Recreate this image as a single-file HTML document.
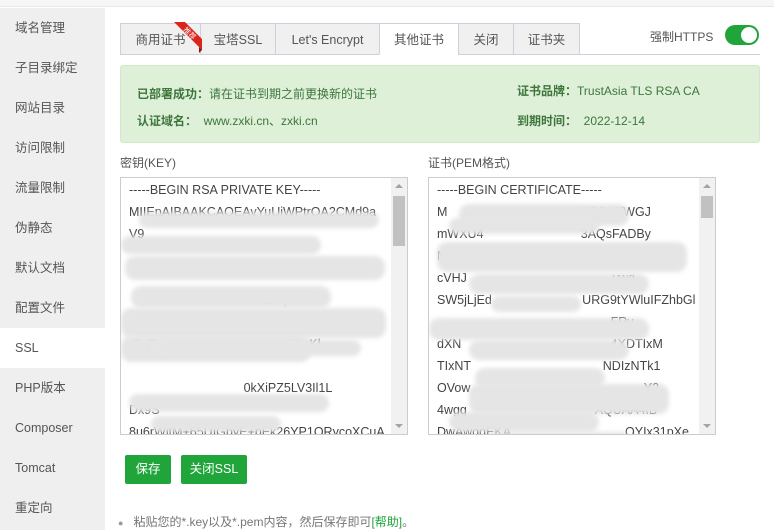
<!DOCTYPE html>
<html><head><meta charset="utf-8">
<style>
*{margin:0;padding:0;box-sizing:border-box}
body{width:774px;height:530px;overflow:hidden;background:#fff;font-family:"Liberation Sans","Noto Sans CJK SC",sans-serif;font-size:12px;color:#333;position:relative}
.top{position:absolute;left:0;top:0;width:774px;height:7px;background:#f6f6f6;border-bottom:1px solid #e8e8e8}
.side{position:absolute;left:0;top:8px;width:105px;height:522px;background:#efefef}
.side div{height:40px;line-height:40px;padding-left:15px;font-size:12.5px;color:#555}
.side div.on{background:#fff}
.tabs{position:absolute;left:120px;top:23px;height:32px;display:flex}
.tab{height:32px;line-height:32px;border:1px solid #cfcfdc;border-right:none;background:#f0f0f0;font-size:12.5px;color:#555;text-align:center}
.tab.on{background:#fff;border-bottom-color:#fff}
.tab:last-child{border-right:1px solid #cfcfdc}
.tline{position:absolute;left:120px;top:54px;width:640px;height:1px;background:#cfcfdc}
.green{position:absolute;left:120px;top:65px;width:640px;height:78px;background:#dff0d8;border:1px solid #d3e8c8;border-radius:3px;color:#3c763d;font-size:12px}
.green b{font-weight:bold}
.lbl{position:absolute;top:154px;font-size:12px;color:#555}
.ta{position:absolute;top:177px;height:258px;border:1px solid #ccc;overflow:hidden;background:#fff}
.ta .t{padding:1px 0 0 8px;font-size:12.5px;line-height:22px;color:#444;white-space:pre}
.sb{position:absolute;right:0;top:0;width:16px;height:100%;background:#f1f1f1}
.sb .th{position:absolute;left:2px;top:18px;width:12px;height:50px;background:#c1c1c1}
.sb .up,.sb .dn{position:absolute;left:4px;width:0;height:0;border-left:4px solid transparent;border-right:4px solid transparent}
.sb .up{top:6px;border-bottom:4px solid #a3a3a3}
.sb .dn{bottom:6px;border-top:4px solid #a3a3a3}
.blob{position:absolute;background:#e5e5e5;border-radius:10px;filter:blur(2px)}
.btn{position:absolute;top:455px;height:29px;line-height:29px;background:#20a53a;color:#fff;font-size:12.5px;text-align:center;border-radius:2px}
</style></head><body>
<div class="top"></div>
<div class="side">
<div>域名管理</div><div>子目录绑定</div><div>网站目录</div><div>访问限制</div><div>流量限制</div><div>伪静态</div><div>默认文档</div><div>配置文件</div><div class="on">SSL</div><div>PHP版本</div><div>Composer</div><div>Tomcat</div><div>重定向</div>
</div>
<div class="tline"></div>
<div class="tabs">
<div class="tab" style="width:80px;position:relative">商用证书
<svg style="position:absolute;left:50px;top:-2px" width="31" height="31" viewBox="0 0 31 31"><path d="M3 0 H14 L31 17 V28 Z" fill="#d9251c"/><path d="M31 28 L28 25 V31 Z" fill="#8a1410"/><text x="17" y="13" font-size="7" fill="#fff" transform="rotate(45 17 13)" text-anchor="middle" font-family="Noto Sans CJK SC">推荐</text></svg></div>
<div class="tab" style="width:75px">宝塔SSL</div>
<div class="tab" style="width:104px">Let's Encrypt</div>
<div class="tab on" style="width:79px">其他证书</div>
<div class="tab" style="width:55px">关闭</div>
<div class="tab" style="width:67px">证书夹</div>
</div>
<div style="position:absolute;left:650px;top:28px;font-size:12px;color:#555">强制HTTPS</div>
<div style="position:absolute;left:725px;top:25px;width:34px;height:20px;border-radius:10px;background:#20a53a"><div style="position:absolute;right:2px;top:2px;width:16px;height:16px;border-radius:50%;background:#fff"></div></div>
<div class="green">
<div style="position:absolute;left:16px;top:19px"><b>已部署成功：</b>请在证书到期之前更换新的证书</div>
<div style="position:absolute;left:16px;top:46px"><b>认证域名：</b>&nbsp; www.zxki.cn、zxki.cn</div>
<div style="position:absolute;left:396px;top:16px"><b>证书品牌：</b>TrustAsia TLS RSA CA</div>
<div style="position:absolute;left:396px;top:46px"><b>到期时间：</b>&nbsp; 2022-12-14</div>
</div>
<div class="lbl" style="left:120px">密钥(KEY)</div>
<div class="lbl" style="left:428px">证书(PEM格式)</div>
<div class="ta" style="left:120px;width:288px">
<div class="t">-----BEGIN RSA PRIVATE KEY-----
MIIEpAIBAAKCAQEAyYuUiWPtrOA2CMd9a
V9                                    
                                                   
                                         
                                     EZmpTc3v
                                    
rPpP                                     EDnKl
                                    
                                 0kXiPZ5LV3Il1L
Dx9S                                  
8u6rWitM+65UIGbyE+pEk26YP1ORycoXCuA</div>
<div class="blob" style="left:18px;top:34px;width:240px;height:16px"></div>
<div class="blob" style="left:0;top:58px;width:200px;height:18px"></div>
<div class="blob" style="left:4px;top:78px;width:260px;height:24px"></div>
<div class="blob" style="left:10px;top:108px;width:200px;height:22px"></div>
<div class="blob" style="left:0;top:130px;width:265px;height:30px"></div>
<div class="blob" style="left:0;top:158px;width:190px;height:26px"></div>
<div class="blob" style="left:30px;top:162px;width:210px;height:16px"></div>
<div class="blob" style="left:8px;top:216px;width:200px;height:18px"></div>
<div class="blob" style="left:30px;top:238px;width:130px;height:16px"></div>
<div class="blob" style="left:18px;top:282px;width:205px;height:20px"></div>
<div class="sb"><div class="up"></div><div class="th"></div><div class="dn"></div></div>
</div>
<div class="ta" style="left:428px;width:288px">
<div class="t">-----BEGIN CERTIFICATE-----
M                                      M0GL0lWGJ
mWXU4                            3AQsFADBy
M                                                  EChM
cVHJ                                          ywg
SW5jLjEd                          URG9tYWluIFZhbGl
                                                  FRy
dXN                                           4XDTIxM
TIxNT                                      NDIzNTk1
OVow                                                  Y2
4wgg                                     AQUAA4IB
DwAwggEKA                                 OYIx31pXe</div>
<div class="blob" style="left:30px;top:26px;width:170px;height:22px"></div>
<div class="blob" style="left:20px;top:40px;width:150px;height:16px"></div>
<div class="blob" style="left:8px;top:64px;width:250px;height:30px"></div>
<div class="blob" style="left:40px;top:96px;width:180px;height:20px"></div>
<div class="blob" style="left:62px;top:118px;width:90px;height:16px"></div>
<div class="blob" style="left:0;top:140px;width:220px;height:22px"></div>
<div class="blob" style="left:40px;top:162px;width:160px;height:20px"></div>
<div class="blob" style="left:46px;top:190px;width:130px;height:20px"></div>
<div class="blob" style="left:40px;top:206px;width:200px;height:30px"></div>
<div class="blob" style="left:20px;top:234px;width:150px;height:20px"></div>
<div class="blob" style="left:60px;top:254px;width:140px;height:16px"></div>
<div class="sb"><div class="up"></div><div class="th" style="height:22px"></div><div class="dn"></div></div>
</div>
<div class="btn" style="left:125px;width:46px">保存</div>
<div class="btn" style="left:181px;width:66px">关闭SSL</div>
<div style="position:absolute;left:118px;top:513px;font-size:12px;color:#777"><span style="font-size:9px;color:#999;vertical-align:middle">●</span>&nbsp;&nbsp; 粘贴您的*.key以及*.pem内容，然后保存即可<span style="color:#20a53a">[帮助]</span>。</div>
</body></html>
